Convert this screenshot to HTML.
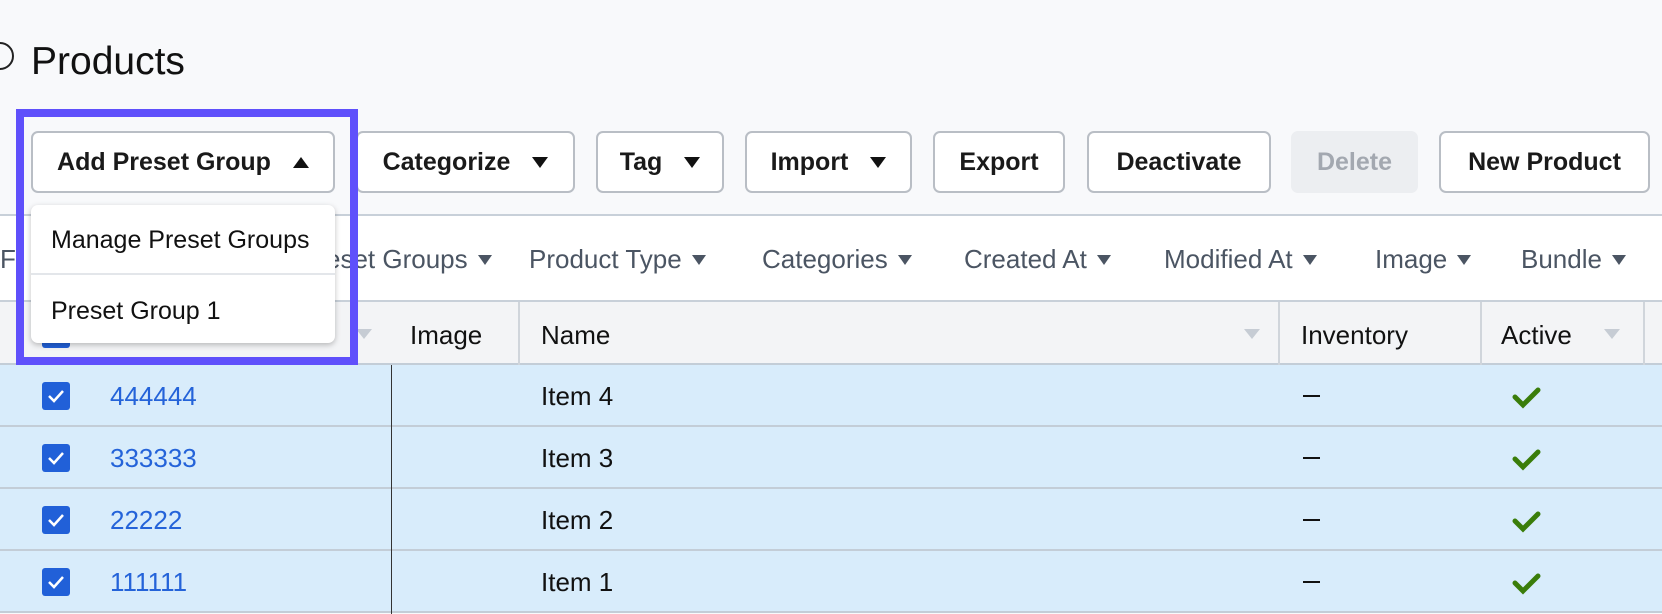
<!DOCTYPE html>
<html><head><style>
*{box-sizing:border-box;margin:0;padding:0}
body{width:1662px;height:614px;overflow:hidden;background:#f8f9fb;font-family:"Liberation Sans",Arial,sans-serif;position:relative;color:#111}
.a{position:absolute}
.btn{position:absolute;top:131px;height:62px;border:2px solid #b9bec5;border-radius:7px;background:#fff;font-size:25px;font-weight:bold;display:flex;align-items:center;justify-content:center;gap:22px;color:#1a1a1a}
.tri{width:0;height:0;border-left:8px solid transparent;border-right:8px solid transparent;border-top:11px solid #111}
.up{border-top:none;border-bottom:11px solid #111}
.f{position:absolute;top:244px;font-size:26px;color:#4b5563;display:flex;align-items:center;gap:10px}
.ft{width:0;height:0;border-left:7px solid transparent;border-right:7px solid transparent;border-top:10px solid #4b5563}
.st{position:absolute;width:0;height:0;border-left:8px solid transparent;border-right:8px solid transparent;border-top:10px solid #c6ccd4;top:329px}
.row{position:absolute;left:0;width:1662px;height:62px;background:#d8ecfb;border-bottom:2px solid #c3cdd7}
.cb{position:absolute;left:42px;top:17px;width:28px;height:28px;background:#2160d8;border-radius:3px}
.row span{position:absolute;top:16px;font-size:26px}
.lk{left:110px;color:#2463d9}
.nm{left:541px;color:#111}
.ds{left:1303px;top:30px!important;width:17px;height:2px;background:#111}
</style></head><body>
<div class="a" style="left:-14px;top:42px;width:28px;height:28px;border:2px solid #222;border-radius:50%"></div>
<div class="a" style="left:31px;top:40px;font-size:39px;color:#111">Products</div>

<div class="btn" style="left:31px;width:304px">Add Preset Group<div class="tri up"></div></div>
<div class="btn" style="left:356px;width:219px">Categorize<div class="tri"></div></div>
<div class="btn" style="left:596px;width:128px">Tag<div class="tri"></div></div>
<div class="btn" style="left:745px;width:167px">Import<div class="tri"></div></div>
<div class="btn" style="left:933px;width:132px">Export</div>
<div class="btn" style="left:1087px;width:184px">Deactivate</div>
<div class="btn" style="left:1291px;width:127px;background:#eceef1;border-color:#eceef1;color:#a3a8b0">Delete</div>
<div class="btn" style="left:1439px;width:211px">New Product</div>

<div class="a" style="left:0;top:214px;width:1662px;height:88px;background:#fff;border-top:2px solid #c8d0d9;border-bottom:2px solid #c8d0d9"></div>
<div class="f" style="left:0">F</div>
<div class="f" style="left:300px">Preset Groups<div class="ft"></div></div>
<div class="f" style="left:529px">Product Type<div class="ft"></div></div>
<div class="f" style="left:762px">Categories<div class="ft"></div></div>
<div class="f" style="left:964px">Created At<div class="ft"></div></div>
<div class="f" style="left:1164px">Modified At<div class="ft"></div></div>
<div class="f" style="left:1375px">Image<div class="ft"></div></div>
<div class="f" style="left:1521px">Bundle<div class="ft"></div></div>

<div class="a" style="left:0;top:302px;width:1662px;height:63px;background:#f3f4f6;border-bottom:2px solid #c3cdd7"></div>
<div class="a" style="left:518px;top:302px;width:2px;height:63px;background:#d0d5db"></div>
<div class="a" style="left:1278px;top:302px;width:2px;height:63px;background:#d0d5db"></div>
<div class="a" style="left:1480px;top:302px;width:2px;height:63px;background:#d0d5db"></div>
<div class="a" style="left:1643px;top:302px;width:2px;height:63px;background:#d0d5db"></div>
<div class="a" style="left:42px;top:320px;width:28px;height:28px;background:#2160d8;border-radius:3px"></div>
<div class="a" style="left:410px;top:320px;font-size:26px">Image</div>
<div class="a" style="left:541px;top:320px;font-size:26px">Name</div>
<div class="a" style="left:1301px;top:320px;font-size:26px">Inventory</div>
<div class="a" style="left:1501px;top:320px;font-size:26px">Active</div>
<div class="st" style="left:356px"></div><div class="st" style="left:1244px"></div><div class="st" style="left:1604px"></div>

<div class="row" style="top:365px"><div class="cb"></div><span class="lk">444444</span><span class="nm">Item 4</span><span class="ds"></span></div>
<div class="row" style="top:427px"><div class="cb"></div><span class="lk">333333</span><span class="nm">Item 3</span><span class="ds"></span></div>
<div class="row" style="top:489px"><div class="cb"></div><span class="lk">22222</span><span class="nm">Item 2</span><span class="ds"></span></div>
<div class="row" style="top:551px"><div class="cb"></div><span class="lk">111111</span><span class="nm">Item 1</span><span class="ds"></span></div>
<div class="a" style="left:391px;top:365px;width:1px;height:249px;background:#333"></div>
<svg class="a" style="left:0;top:365px" width="1662" height="249">
<g fill="none" stroke="#fff" stroke-width="2.5"><path d="M49 31l5 5 9-10"/><path d="M49 93l5 5 9-10"/><path d="M49 155l5 5 9-10"/><path d="M49 217l5 5 9-10"/></g>
<g fill="none" stroke="#3a7d0a" stroke-width="5" stroke-linecap="round"><path d="M1515 32l8 8 15-15"/><path d="M1515 94l8 8 15-15"/><path d="M1515 156l8 8 15-15"/><path d="M1515 218l8 8 15-15"/></g>
</svg>

<div class="a" style="left:31px;top:205px;width:304px;height:138px;background:#fff;border-radius:7px;box-shadow:0 2px 6px rgba(0,0,0,.25)">
<div class="a" style="left:20px;top:21px;font-size:25px">Manage Preset Groups</div>
<div class="a" style="left:0;top:68px;width:304px;height:2px;background:#e3e6ea"></div>
<div class="a" style="left:20px;top:92px;font-size:25px">Preset Group 1</div>
</div>
<div class="a" style="left:16px;top:109px;width:342px;height:256px;border:8px solid #5f50fb"></div>
</body></html>
